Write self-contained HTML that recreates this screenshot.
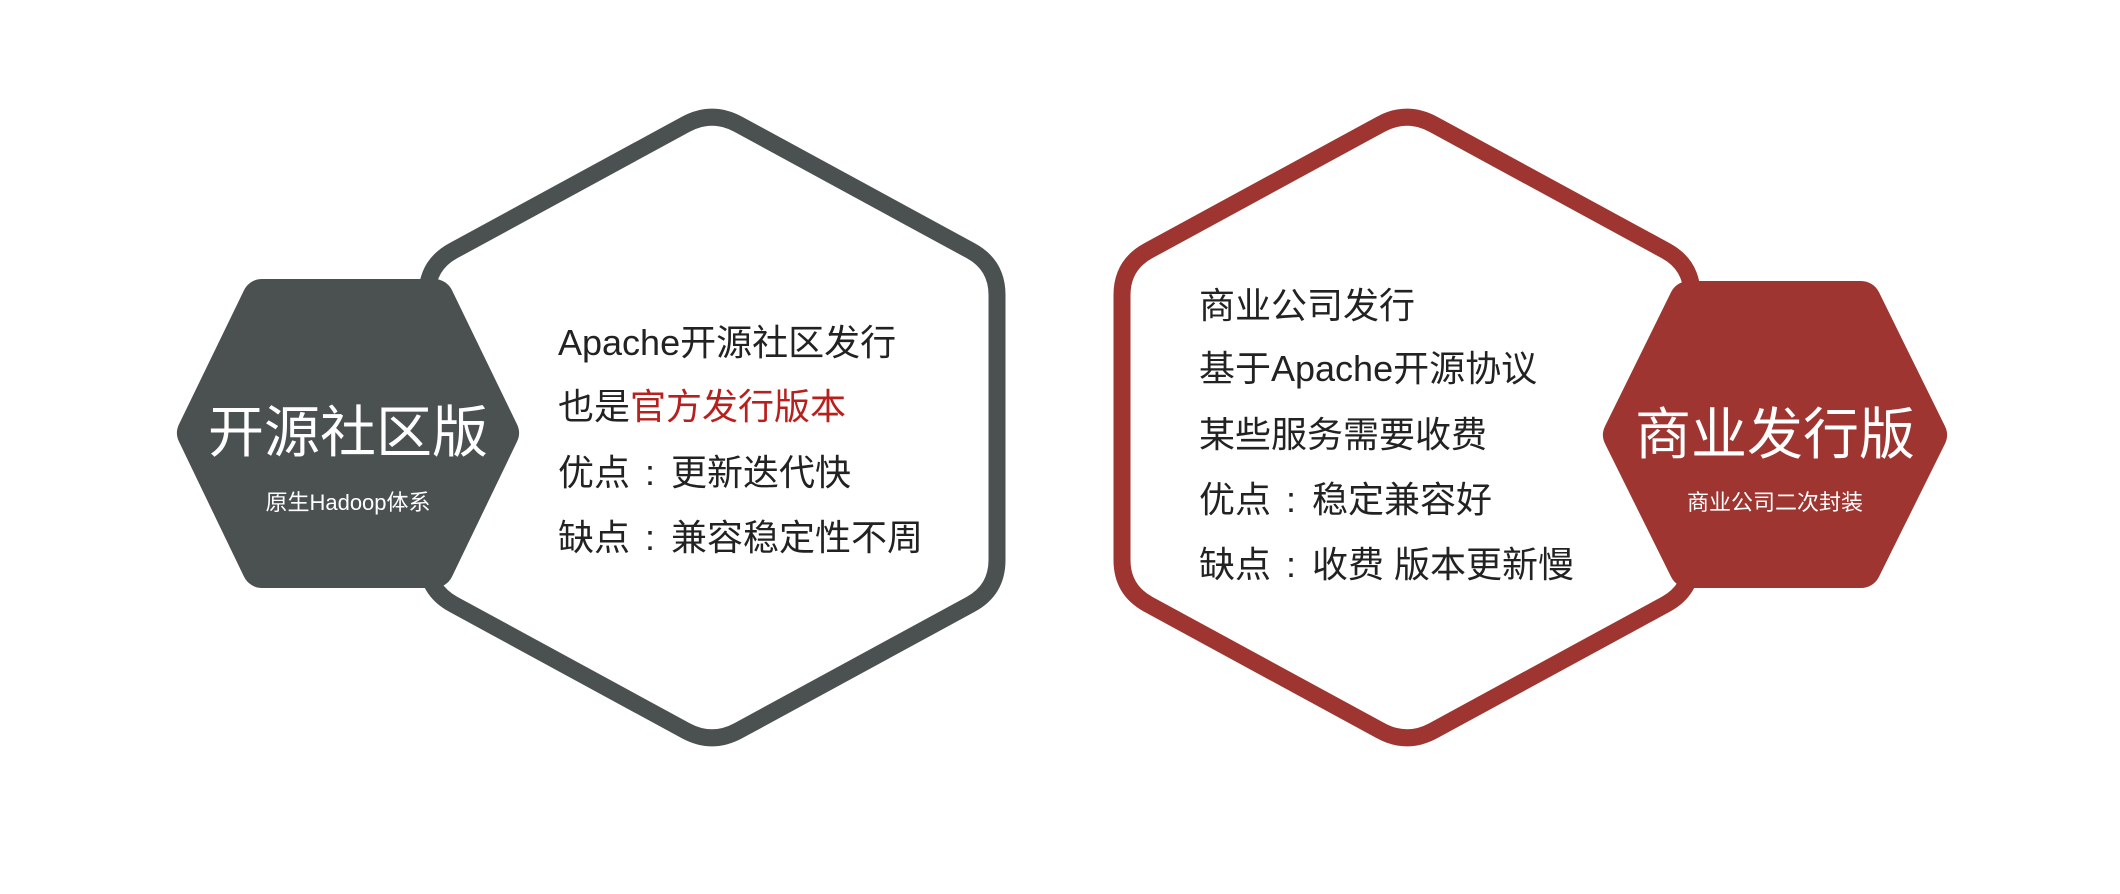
<!DOCTYPE html>
<html><head><meta charset="utf-8"><style>
body{margin:0;width:2120px;height:894px;background:#fff;position:relative;overflow:hidden;font-family:"Liberation Sans","Noto Sans CJK SC",sans-serif;}
.t{position:absolute;white-space:nowrap;color:#222;font-size:36px;line-height:40px;}
.t b{font-weight:normal;margin:0 16px 0 15px;}
.c{position:absolute;white-space:nowrap;color:#fff;text-align:center;transform:translateX(-50%);}
</style></head><body>
<svg width="2120" height="894" style="position:absolute;left:0;top:0">
<path d="M 738.3,124.3 L 970.7,250.7 Q 997,265 997,295 L 997,560 Q 997,590 970.7,604.3 L 738.3,730.7 Q 712,745 685.7,730.7 L 453.3,604.3 Q 427,590 427,560 L 427,295 Q 427,265 453.3,250.7 L 685.7,124.3 Q 712,110 738.3,124.3 Z" fill="#fff" stroke="#4b5150" stroke-width="17"/>
<polygon points="262,299 434,299 499,433 434,568 262,568 197,433" fill="#4b5150" stroke="#4b5150" stroke-width="40" stroke-linejoin="round"/>
<path d="M 1433.3,124.3 L 1665.7,250.7 Q 1692,265 1692,295 L 1692,560 Q 1692,590 1665.7,604.3 L 1433.3,730.7 Q 1407,745 1380.7,730.7 L 1148.3,604.3 Q 1122,590 1122,560 L 1122,295 Q 1122,265 1148.3,250.7 L 1380.7,124.3 Q 1407,110 1433.3,124.3 Z" fill="#fff" stroke="#9e3530" stroke-width="17"/>
<polygon points="1689,301 1861,301 1927,435 1861,568 1689,568 1623,435" fill="#9e3530" stroke="#9e3530" stroke-width="40" stroke-linejoin="round"/>
</svg>
<div class="c" style="left:348px;top:400px;font-size:56px;line-height:66px">开源社区版</div>
<div class="c" style="left:348px;top:489px;font-size:22px;line-height:28px">原生Hadoop体系</div>
<div class="c" style="left:1775px;top:402px;font-size:56px;line-height:66px">商业发行版</div>
<div class="c" style="left:1775px;top:489px;font-size:22px;line-height:28px">商业公司二次封装</div>
<div class="t" style="left:558px;top:323px">Apache开源社区发行</div>
<div class="t" style="left:558px;top:387px">也是<span style="color:#b8201d">官方发行版本</span></div>
<div class="t" style="left:558px;top:453px">优点<b>:</b>更新迭代快</div>
<div class="t" style="left:558px;top:518px">缺点<b>:</b>兼容稳定性不周</div>
<div class="t" style="left:1199px;top:286px">商业公司发行</div>
<div class="t" style="left:1199px;top:349px">基于Apache开源协议</div>
<div class="t" style="left:1199px;top:415px">某些服务需要收费</div>
<div class="t" style="left:1199px;top:480px">优点<b>:</b>稳定兼容好</div>
<div class="t" style="left:1199px;top:545px">缺点<b>:</b>收费 版本更新慢</div>
</body></html>
